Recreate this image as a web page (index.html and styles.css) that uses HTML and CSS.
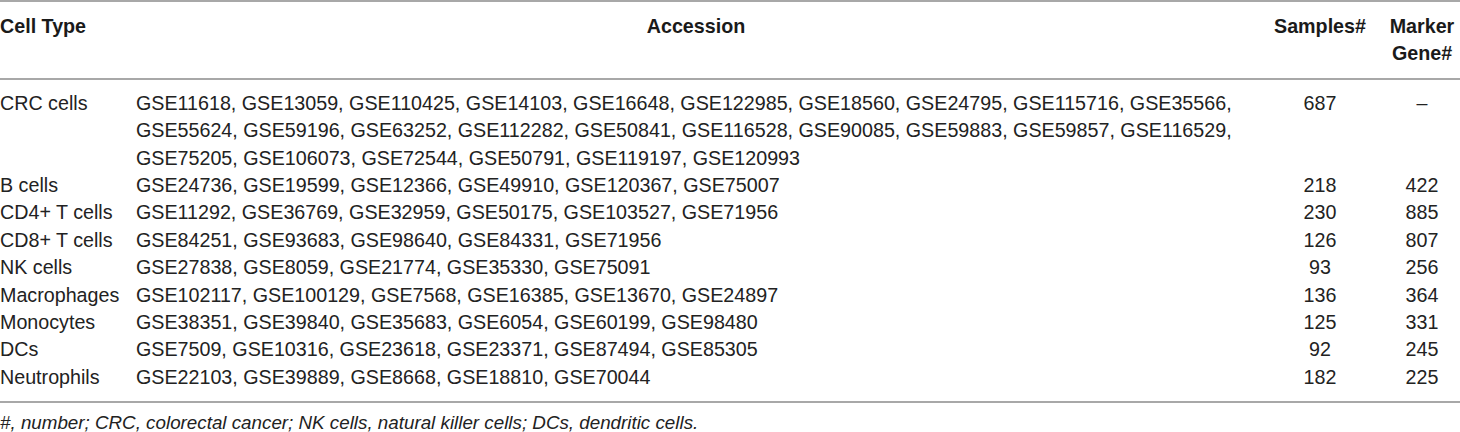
FILE: index.html
```html
<!DOCTYPE html>
<html lang="en">
<head>
<meta charset="utf-8">
<title>Cell types</title>
<link rel="stylesheet" href="styles.css">
</head>
<body>
<table class="data">
  <colgroup>
    <col class="c-type">
    <col class="c-acc">
    <col class="c-samp">
    <col class="c-mark">
  </colgroup>
  <thead>
    <tr>
      <th class="left">Cell Type</th>
      <th class="center">Accession</th>
      <th class="center">Samples#</th>
      <th class="center">Marker<br>Gene#</th>
    </tr>
  </thead>
  <tbody>
    <tr>
      <td>CRC cells</td>
      <td>GSE11618, GSE13059, GSE110425, GSE14103, GSE16648, GSE122985, GSE18560, GSE24795, GSE115716, GSE35566, GSE55624, GSE59196, GSE63252, GSE112282, GSE50841, GSE116528, GSE90085, GSE59883, GSE59857, GSE116529, GSE75205, GSE106073, GSE72544, GSE50791, GSE119197, GSE120993</td>
      <td class="center">687</td>
      <td class="center">–</td>
    </tr>
    <tr><td>B cells</td><td>GSE24736, GSE19599, GSE12366, GSE49910, GSE120367, GSE75007</td><td class="center">218</td><td class="center">422</td></tr>
    <tr><td>CD4+ T cells</td><td>GSE11292, GSE36769, GSE32959, GSE50175, GSE103527, GSE71956</td><td class="center">230</td><td class="center">885</td></tr>
    <tr><td>CD8+ T cells</td><td>GSE84251, GSE93683, GSE98640, GSE84331, GSE71956</td><td class="center">126</td><td class="center">807</td></tr>
    <tr><td>NK cells</td><td>GSE27838, GSE8059, GSE21774, GSE35330, GSE75091</td><td class="center">93</td><td class="center">256</td></tr>
    <tr><td>Macrophages</td><td>GSE102117, GSE100129, GSE7568, GSE16385, GSE13670, GSE24897</td><td class="center">136</td><td class="center">364</td></tr>
    <tr><td>Monocytes</td><td>GSE38351, GSE39840, GSE35683, GSE6054, GSE60199, GSE98480</td><td class="center">125</td><td class="center">331</td></tr>
    <tr><td>DCs</td><td>GSE7509, GSE10316, GSE23618, GSE23371, GSE87494, GSE85305</td><td class="center">92</td><td class="center">245</td></tr>
    <tr><td>Neutrophils</td><td>GSE22103, GSE39889, GSE8668, GSE18810, GSE70044</td><td class="center">182</td><td class="center">225</td></tr>
  </tbody>
</table>
<p class="note">#, number; CRC, colorectal cancer; NK cells, natural killer cells; DCs, dendritic cells.</p>
</body>
</html>
```
FILE: styles.css
```css
html, body {
  margin: 0;
  padding: 0;
  background: #fff;
}
body {
  font-family: "Liberation Sans", Arial, Helvetica, sans-serif;
  color: #222;
  width: 1460px;
}
.data {
  width: 1460px;
  border-collapse: collapse;
  table-layout: fixed;
  font-size: 19.7px;
  line-height: 27.4px;
}
.c-type { width: 136px; }
.c-acc { width: 1120px; }
.c-samp { width: 128px; }
.c-mark { width: 76px; }
.data th,
.data td {
  padding: 0;
  vertical-align: top;
  text-align: left;
}
.data th {
  font-weight: bold;
  color: #1a1a1a;
}
.data thead tr {
  border-top: 2px solid #a8a8a8;
  border-bottom: 2px solid #a8a8a8;
}
.data thead th {
  padding-top: 11px;
  padding-bottom: 10px;
}
.data tbody tr:first-child td {
  padding-top: 10px;
}
.data tbody tr:last-child td {
  padding-bottom: 10px;
}
.data tbody tr:last-child {
  border-bottom: 2px solid #a8a8a8;
}
.data .center {
  text-align: center;
}
.note {
  margin: 0;
  padding-top: 8px;
  font-size: 18.8px;
  line-height: 24px;
  font-style: italic;
  color: #222;
}
```
